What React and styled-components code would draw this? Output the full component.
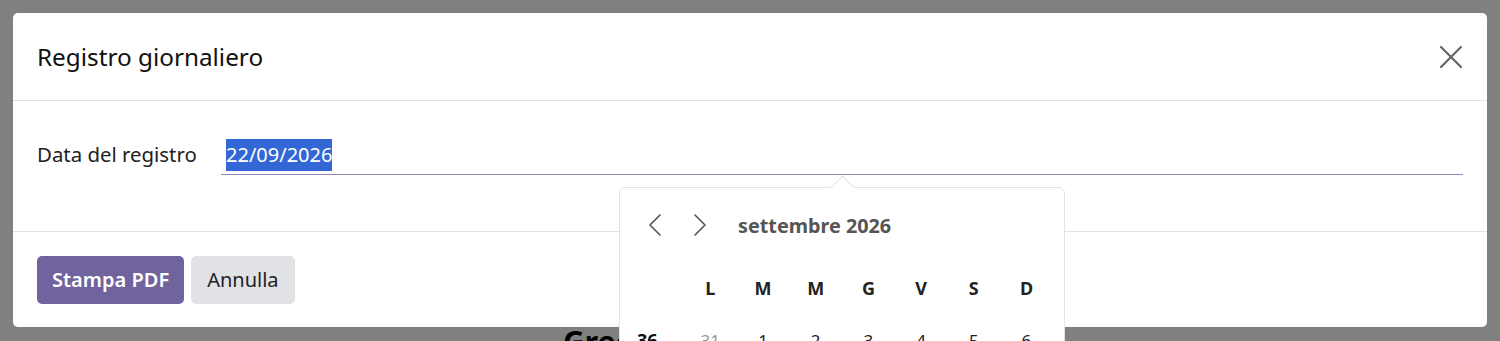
import React from 'react';
import styled, { createGlobalStyle } from 'styled-components';

const GlobalStyle = createGlobalStyle`
  html, body {
    margin: 0;
    padding: 0;
    background: #808080;
    overflow: hidden;
  }
  body {
    font-family: "Noto Sans", "Open Sans", sans-serif;
  }
`;

const weekdays = ['L', 'M', 'M', 'G', 'V', 'S', 'D'];
const firstWeek = [31, 1, 2, 3, 4, 5, 6];

const ChevronLeft = () => (
  <svg width="14" height="24" viewBox="0 0 14 24" fill="none">
    <path d="M12 2L2 12l10 10" stroke="#555" strokeWidth="1.6" strokeLinecap="round" strokeLinejoin="round" />
  </svg>
);

const ChevronRight = () => (
  <svg width="14" height="24" viewBox="0 0 14 24" fill="none">
    <path d="M2 2l10 10-10 10" stroke="#555" strokeWidth="1.6" strokeLinecap="round" strokeLinejoin="round" />
  </svg>
);

const CloseIcon = () => (
  <svg width="24" height="24" viewBox="0 0 24 24" fill="none">
    <path d="M2 2l20 20M22 2L2 22" stroke="#666" strokeWidth="2.2" strokeLinecap="round" />
  </svg>
);

const App = () => {
  return (
    <>
      <GlobalStyle />
      <Backdrop>
        <Modal>
          <Header>
            <Title>Registro giornaliero</Title>
            <CloseButton aria-label="Chiudi">
              <CloseIcon />
            </CloseButton>
          </Header>
          <Body>
            <Label>Data del registro</Label>
            <Field>
              <DateInput>
                <Selected>22/09/2026</Selected>
              </DateInput>
              <Picker>
                <PickerArrow />
                <PickerHead>
                  <NavButton><ChevronLeft /></NavButton>
                  <NavButton><ChevronRight /></NavButton>
                  <MonthLabel>settembre 2026</MonthLabel>
                </PickerHead>
                <DayGrid>
                  <DayCell />
                  {weekdays.map((d, i) => (
                    <WeekdayCell key={i}>{d}</WeekdayCell>
                  ))}
                  <WeekNumber>36</WeekNumber>
                  {firstWeek.map((n, i) => (
                    <DayCell key={i} $muted={n > 20}>{n}</DayCell>
                  ))}
                </DayGrid>
              </Picker>
            </Field>
          </Body>
          <Footer>
            <Button $primary>Stampa PDF</Button>
            <Button>Annulla</Button>
          </Footer>
        </Modal>
        <PageTitle>Grecia</PageTitle>
      </Backdrop>
    </>
  );
};

const Backdrop = styled.div`
  width: 1500px;
  height: 341px;
  padding: 13px 13px 0;
  box-sizing: border-box;
  overflow: hidden;
  background: #808080;
`;

const Modal = styled.div`
  position: relative;
  z-index: 2;
  background: #fff;
  border-radius: 5px;
  display: flex;
  flex-direction: column;
`;

const Header = styled.div`
  height: 87px;
  padding: 0 24px;
  display: flex;
  align-items: center;
  justify-content: space-between;
  border-bottom: 1px solid #dee2e6;
`;

const Title = styled.h4`
  margin: 0;
  font-size: 24.3px;
  font-weight: 400;
  color: #111;
`;

const CloseButton = styled.button`
  border: 0;
  background: none;
  padding: 0;
  width: 24px;
  height: 24px;
  display: flex;
  cursor: pointer;
`;

const Body = styled.div`
  height: 131px;
  padding: 30px 24px 0;
  box-sizing: border-box;
  display: flex;
  align-items: flex-start;
  border-bottom: 1px solid #dee2e6;
`;

const Label = styled.label`
  width: 184px;
  flex: none;
  padding-top: 9px;
  font-size: 20.4px;
  color: #222;
`;

const Field = styled.div`
  position: relative;
  flex: 1;
`;

const DateInput = styled.div`
  height: 44px;
  padding: 8px 0 0 5px;
  box-sizing: border-box;
  border-bottom: 1px solid #8f86b6;
  font-size: 20px;
  line-height: 32px;
`;

const Selected = styled.span`
  display: inline-block;
  background: #3367d6;
  color: #fff;
`;

const Picker = styled.div`
  position: absolute;
  z-index: 5;
  left: 398px;
  top: 56px;
  width: 446px;
  height: 200px;
  box-sizing: border-box;
  background: #fff;
  border: 1px solid #e3e3e3;
  border-radius: 6px;
`;

const PickerArrow = styled.div`
  position: absolute;
  left: 214px;
  top: -9px;
  width: 16px;
  height: 16px;
  background: #fff;
  border-left: 1px solid #e3e3e3;
  border-top: 1px solid #e3e3e3;
  transform: rotate(45deg);
`;

const PickerHead = styled.div`
  height: 74px;
  padding: 0 0 0 28px;
  box-sizing: border-box;
  display: flex;
  align-items: center;
  gap: 31px;
`;

const NavButton = styled.span`
  width: 14px;
  height: 24px;
  display: flex;
`;

const MonthLabel = styled.span`
  font-size: 19.8px;
  font-weight: 700;
  color: #555;
`;

const DayGrid = styled.div`
  display: grid;
  grid-template-columns: 64px repeat(7, 52.7px);
  grid-auto-rows: 52px;
`;

const DayCell = styled.div`
  display: flex;
  align-items: center;
  justify-content: center;
  font-size: 17px;
  color: ${(p) => (p.$muted ? '#999' : '#222')};
`;

const WeekdayCell = styled(DayCell)`
  font-weight: 700;
  font-size: 18px;
`;

const WeekNumber = styled(DayCell)`
  justify-content: flex-start;
  padding-left: 17px;
  font-weight: 700;
  font-size: 18px;
  color: #111;
`;

const Footer = styled.div`
  height: 95px;
  padding: 0 24px;
  display: flex;
  align-items: center;
  gap: 7px;
`;

const Button = styled.button`
  height: 48px;
  padding: 0 ${(p) => (p.$primary ? 15 : 16)}px;
  border: 0;
  border-radius: 5px;
  font-family: inherit;
  font-size: 20px;
  font-weight: ${(p) => (p.$primary ? 600 : 400)};
  background: ${(p) => (p.$primary ? '#71639e' : '#e0e2e6')};
  color: ${(p) => (p.$primary ? '#fff' : '#222')};
`;

const PageTitle = styled.h1`
  margin: 0 0 0 550px;
  font-size: 30px;
  font-weight: 700;
  color: #000;
  line-height: 1;
`;

export default App;
